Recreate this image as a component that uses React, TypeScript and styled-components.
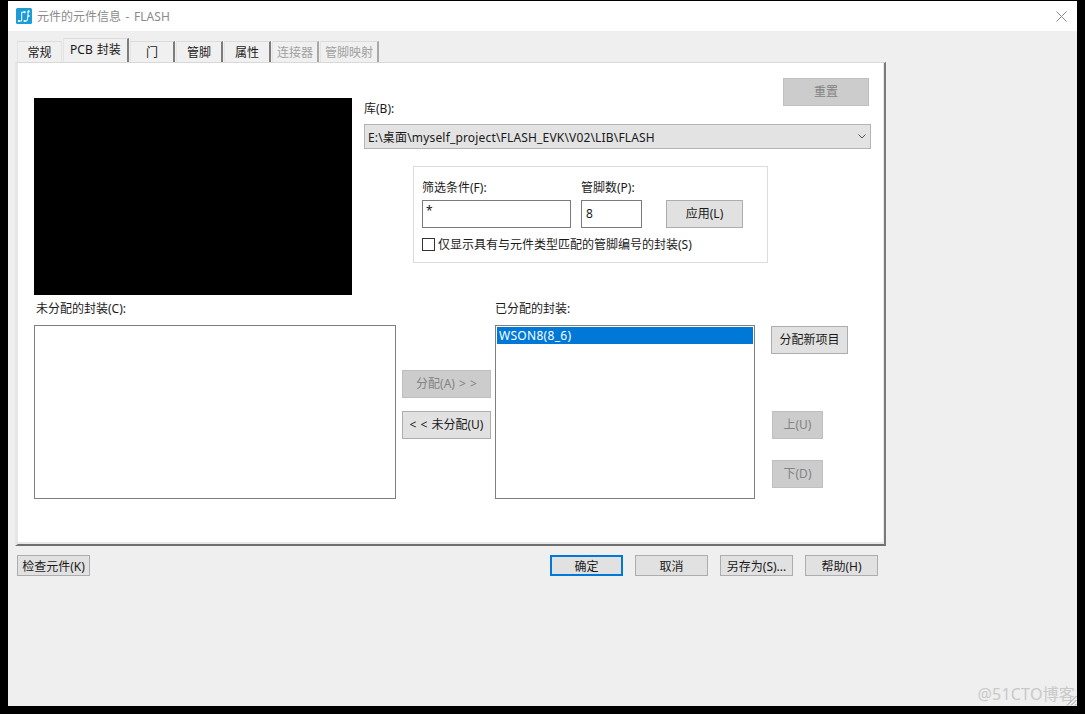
import React from 'react';
import styled, { createGlobalStyle } from 'styled-components';

const GlobalStyle = createGlobalStyle`
  html, body {
    margin: 0;
    padding: 0;
    background: #000;
  }
  body {
    font-family: 'Noto Sans', 'Noto Sans CJK SC', sans-serif;
    font-size: 12px;
    color: #1a1a1a;
  }
`;

const tabs = [
  { label: '常规', width: 45, plain: true },
  { label: 'PCB 封装', width: 66, active: true },
  { label: '门', width: 45 },
  { label: '管脚', width: 47 },
  { label: '属性', width: 47 },
  { label: '连接器', width: 47, disabled: true },
  { label: '管脚映射', width: 59, disabled: true },
];

const AppIcon = () => (
  <svg width="16" height="16" viewBox="0 0 16 16">
    <rect width="16" height="16" rx="1.5" fill="#1b9cd8" />
    <path
      d="M2.5 13h3.2V4.2h2.4M8.5 13h2.5l1-5V3.5"
      fill="none"
      stroke="#fff"
      strokeWidth="1"
    />
    <circle cx="2.8" cy="13" r="1.1" fill="#fff" />
    <circle cx="8.6" cy="4.2" r="1.1" fill="#fff" />
    <circle cx="8.6" cy="13" r="1.1" fill="#fff" />
    <circle cx="12.6" cy="8" r="1.1" fill="#fff" />
    <circle cx="12.6" cy="3.4" r="1.1" fill="#fff" />
  </svg>
);

const App: React.FC = () => {
  return (
    <>
      <GlobalStyle />
      <Window>
        <TitleBar>
          <TitleLeft>
            <AppIcon />
            <TitleText>元件的元件信息 - FLASH</TitleText>
          </TitleLeft>
          <svg width="11" height="11" viewBox="0 0 11 11">
            <path d="M0.5 0.5l10 10M10.5 0.5l-10 10" stroke="#8a8a8a" strokeWidth="1" />
          </svg>
        </TitleBar>

        <Body>
          <TabRow>
            {tabs.map((t) => (
              <Tab key={t.label} $w={t.width} $active={t.active} $disabled={t.disabled} $plain={t.plain}>
                {t.label}
              </Tab>
            ))}
          </TabRow>

          <Panel>
            <TopSection>
              <Preview />
              <LibraryColumn>
                <ResetRow>
                  <Button $w={86} $h={28} disabled>重置</Button>
                </ResetRow>
                <LibraryLabel>库(B):</LibraryLabel>
                <Combo>
                  <span>E:\桌面\myself_project\FLASH_EVK\V02\LIB\FLASH</span>
                  <svg width="8" height="5" viewBox="0 0 8 5">
                    <path d="M0.5 0.5L4 4l3.5-3.5" fill="none" stroke="#555" strokeWidth="1" />
                  </svg>
                </Combo>
                <FilterGroup>
                  <FilterFields>
                    <Field>
                      <FieldLabel>筛选条件(F):</FieldLabel>
                      <TextBox $w={149}>*</TextBox>
                    </Field>
                    <Field>
                      <FieldLabel>管脚数(P):</FieldLabel>
                      <TextBox $w={61} $center>8</TextBox>
                    </Field>
                    <Button $w={77} $h={28}>应用(L)</Button>
                  </FilterFields>
                  <CheckRow>
                    <CheckBox />
                    仅显示具有与元件类型匹配的管脚编号的封装(S)
                  </CheckRow>
                </FilterGroup>
              </LibraryColumn>
            </TopSection>

            <BottomSection>
              <ListColumn>
                <ListLabel $indent>未分配的封装(C):</ListLabel>
                <ListBox $w={362} />
              </ListColumn>
              <MoveButtons>
                <Button $w={89} $h={28} disabled>分配(A) &gt; &gt;</Button>
                <Button $w={89} $h={28}>&lt; &lt; 未分配(U)</Button>
              </MoveButtons>
              <ListColumn>
                <ListLabel>已分配的封装:</ListLabel>
                <ListBox $w={260}>
                  <ListItem>WSON8(8_6)</ListItem>
                </ListBox>
              </ListColumn>
              <SideButtons>
                <Button $w={77} $h={28}>分配新项目</Button>
                <OrderButtons>
                  <Button $w={51} $h={28} disabled>上(U)</Button>
                  <Button $w={51} $h={28} disabled>下(D)</Button>
                </OrderButtons>
              </SideButtons>
            </BottomSection>
          </Panel>

          <Footer>
            <Button $w={73} $h={21}>检查元件(K)</Button>
            <FooterRight>
              <Button $w={73} $h={21} $primary>确定</Button>
              <Button $w={73} $h={21}>取消</Button>
              <Button $w={73} $h={21}>另存为(S)...</Button>
              <Button $w={73} $h={21}>帮助(H)</Button>
            </FooterRight>
          </Footer>
        </Body>

        <Watermark>@51CTO博客</Watermark>
        <Grip width="12" height="12" viewBox="0 0 12 12">
          <path d="M11.5 2L2 11.5M11.5 6L6 11.5M11.5 10L10 11.5" stroke="#9a9a9a" strokeWidth="1" />
        </Grip>
      </Window>
    </>
  );
};

export default App;

const Window = styled.div`
  position: relative;
  width: 1069px;
  height: 705px;
  margin: 1px 0 0 8px;
  background: #efefef;
  display: flex;
  flex-direction: column;
`;

const TitleBar = styled.div`
  height: 30px;
  flex: none;
  background: #fff;
  display: flex;
  align-items: center;
  justify-content: space-between;
  padding: 0 10px 0 8px;
`;

const TitleLeft = styled.div`
  display: flex;
  align-items: center;
  gap: 5px;
`;

const TitleText = styled.span`
  font-size: 12px;
  word-spacing: 1.5px;
  color: #8a8a8a;
`;

const Body = styled.div`
  flex: 1;
  padding: 8px 0 0 7px;
`;

const TabRow = styled.div`
  display: flex;
  align-items: flex-end;
  gap: 1px;
  height: 23px;
  padding-left: 2px;
`;

const Tab = styled.div<{ $w: number; $active?: boolean; $disabled?: boolean; $plain?: boolean }>`
  box-sizing: border-box;
  width: ${(p) => p.$w}px;
  height: ${(p) => (p.$active ? 24 : 21)}px;
  margin-top: ${(p) => (p.$active ? -2 : 0)}px;
  display: flex;
  align-items: center;
  justify-content: center;
  padding-bottom: ${(p) => (p.$active ? 3 : 0)}px;
  background: #f0f0f0;
  border-top: 1px solid #dcdcdc;
  border-left: 1px solid #e4e4e4;
  border-right: ${(p) => (p.$plain ? '1px solid #e4e4e4' : `2px solid ${p.$disabled ? '#a8a8a8' : '#7d7d7d'}`)};
  color: ${(p) => (p.$disabled ? '#a0a0a0' : '#1a1a1a')};
  word-spacing: 1px;
  white-space: nowrap;
`;

const Panel = styled.div`
  box-sizing: border-box;
  width: 871px;
  height: 484px;
  background: #fff;
  border-top: 1px solid #d8d8d8;
  border-left: 3px solid #e6e6e6;
  border-right: 2px solid #7a7a7a;
  border-bottom: 2px solid #6f6f6f;
  box-shadow: inset 0 -2px 0 #e8e8e8, inset -1px 0 0 #e8e8e8;
  padding: 15px 0 0 16px;
`;

const TopSection = styled.div`
  display: flex;
  gap: 12px;
`;

const Preview = styled.div`
  width: 318px;
  height: 197px;
  margin-top: 20px;
  background: #000;
`;

const LibraryColumn = styled.div`
  width: 507px;
`;

const ResetRow = styled.div`
  display: flex;
  justify-content: flex-end;
  padding-right: 2px;
`;

const LibraryLabel = styled.div`
  height: 18px;
  line-height: 18px;
  margin: -6px 0 6px;
`;

const Combo = styled.div`
  box-sizing: border-box;
  height: 25px;
  background: #e3e3e3;
  border: 1px solid #b4b4b4;
  letter-spacing: 0.17px;
  display: flex;
  align-items: center;
  justify-content: space-between;
  padding: 0 3px 0 3px;

  svg {
    margin-right: 1px;
  }
`;

const FilterGroup = styled.div`
  box-sizing: border-box;
  width: 355px;
  height: 97px;
  margin: 17px 0 0 49px;
  border: 1px solid #dcdcdc;
  padding: 13px 0 0 8px;
`;

const FilterFields = styled.div`
  display: flex;
  align-items: flex-end;
  gap: 10px;

  button {
    margin: 0 0 0 14px;
  }
`;

const Field = styled.div`
  display: flex;
  flex-direction: column;
`;

const FieldLabel = styled.div`
  height: 20px;
  line-height: 16px;
`;

const TextBox = styled.div<{ $w: number; $center?: boolean }>`
  box-sizing: border-box;
  width: ${(p) => p.$w}px;
  height: 28px;
  border: 1px solid #7a7a7a;
  padding: ${(p) => (p.$center ? '4px 4px' : '1px 3px')};
  background: #fff;
`;

const CheckRow = styled.div`
  display: flex;
  align-items: center;
  gap: 3px;
  margin-top: 8px;
  height: 16px;
`;

const CheckBox = styled.span`
  box-sizing: border-box;
  width: 13px;
  height: 13px;
  border: 1px solid #333;
  background: #fff;
`;

const BottomSection = styled.div`
  display: flex;
  margin-top: 5px;
`;

const ListColumn = styled.div`
  display: flex;
  flex-direction: column;
`;

const ListLabel = styled.div<{ $indent?: boolean }>`
  height: 18px;
  line-height: 18px;
  margin-bottom: 7px;
  padding-left: ${(p) => (p.$indent ? 2 : 0)}px;
`;

const ListBox = styled.div<{ $w: number }>`
  box-sizing: border-box;
  width: ${(p) => p.$w}px;
  height: 174px;
  background: #fff;
  border: 1px solid #7f7f7f;
  padding: 1px;
`;

const ListItem = styled.div`
  height: 17px;
  line-height: 17px;
  background: #0078d7;
  color: #fff;
  padding-left: 2px;
  letter-spacing: 0.3px;
`;

const MoveButtons = styled.div`
  display: flex;
  flex-direction: column;
  gap: 13px;
  margin: 70px 4px 0 6px;

  button {
    word-spacing: 1px;
  }
`;

const SideButtons = styled.div`
  display: flex;
  flex-direction: column;
  margin: 26px 0 0 16px;
`;

const OrderButtons = styled.div`
  display: flex;
  flex-direction: column;
  gap: 21px;
  margin-top: 57px;
  margin-left: 1px;
`;

const Button = styled.button<{ $w: number; $h: number; $primary?: boolean }>`
  box-sizing: border-box;
  width: ${(p) => p.$w}px;
  height: ${(p) => p.$h}px;
  padding: 0 0 ${(p) => (p.$h > 21 ? 2 : 0)}px;
  font: inherit;
  white-space: nowrap;
  color: #1a1a1a;
  background: #e1e1e1;
  border: ${(p) => (p.$primary ? '2px solid #0078d7' : '1px solid #adadad')};

  &:disabled {
    background: #cccccc;
    border-color: #bfbfbf;
    color: #838383;
  }
`;

const Footer = styled.div`
  display: flex;
  justify-content: space-between;
  width: 861px;
  margin: 9px 0 0 2px;
`;

const FooterRight = styled.div`
  display: flex;
  gap: 12px;
`;

const Watermark = styled.div`
  position: absolute;
  right: 2px;
  bottom: 1px;
  font-size: 16px;
  letter-spacing: 0.2px;
  color: #c9c9c9;
`;

const Grip = styled.svg`
  position: absolute;
  right: 0;
  bottom: 0;
`;
